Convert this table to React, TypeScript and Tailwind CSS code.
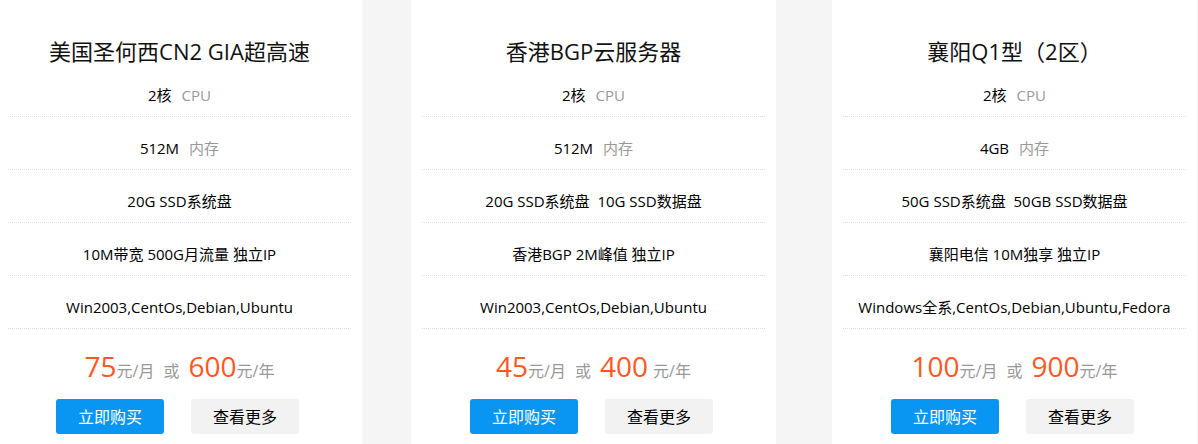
const PLANS = [
  {
    title: "美国圣何西CN2 GIA超高速",
    rows: [
      { main: "2核", sub: "CPU" },
      { main: "512M", sub: "内存" },
      { main: "20G SSD系统盘" },
      { main: "10M带宽 500G月流量 独立IP" },
      { main: "Win2003,CentOs,Debian,Ubuntu" },
    ],
    month: "75",
    year: "600",
    spaced: false,
  },
  {
    title: "香港BGP云服务器",
    rows: [
      { main: "2核", sub: "CPU" },
      { main: "512M", sub: "内存" },
      { main: "20G SSD系统盘  10G SSD数据盘" },
      { main: "香港BGP 2M峰值 独立IP" },
      { main: "Win2003,CentOs,Debian,Ubuntu" },
    ],
    month: "45",
    year: "400",
    spaced: true,
  },
  {
    title: "襄阳Q1型（2区）",
    rows: [
      { main: "2核", sub: "CPU" },
      { main: "4GB", sub: "内存" },
      { main: "50G SSD系统盘  50GB SSD数据盘" },
      { main: "襄阳电信 10M独享 独立IP" },
      { main: "Windows全系,CentOs,Debian,Ubuntu,Fedora" },
    ],
    month: "100",
    year: "900",
    spaced: false,
  },
];

type Plan = (typeof PLANS)[number];

function PlanCard({ plan, className }: { plan: Plan; className: string }) {
  return (
    <div className={`w-[365px] shrink-0 bg-white px-[11px] ${className}`}>
      <h3 className="pt-[39px] text-center text-[22px] leading-[25px] font-normal text-[#111]">
        {plan.title}
      </h3>
      {plan.rows.map((row, i) => (
        <div
          key={i}
          className="border-b border-dotted border-[#ddd] pt-[21px] pb-[11px] text-center text-[15px] leading-[20px] whitespace-pre text-black"
        >
          {row.main}
          {row.sub && <span className="ml-[10px] text-[#999]">{row.sub}</span>}
        </div>
      ))}
      <div className="mt-[23px] flex h-[32px] items-baseline justify-center leading-none text-[#999]">
        <span className="text-[28px] text-[#ff5722]">{plan.month}</span>
        <span className="text-[16px]">元/月</span>
        <span className="mx-[9px] text-[16px]">或</span>
        <span className="text-[28px] text-[#ff5722]">{plan.year}</span>
        <span className={`text-[16px] ${plan.spaced ? "ml-[5px]" : ""}`}>元/年</span>
      </div>
      <div className="mt-[15px] flex justify-center gap-[27px] pr-[4px]">
        <button className="h-[35px] w-[108px] rounded-[3px] bg-[#0996f2] text-[16px] text-white">
          立即购买
        </button>
        <button className="h-[35px] w-[108px] rounded-[3px] bg-[#f2f2f2] text-[16px] text-black">
          查看更多
        </button>
      </div>
    </div>
  );
}

export default function App() {
  return (
    <div
      className="h-[444px] w-[1198px] overflow-hidden bg-[#f5f5f5]"
      style={{ fontFamily: '"Open Sans", "Noto Sans CJK SC", sans-serif' }}
    >
      <div className="-ml-[3px] flex h-full">
        <PlanCard plan={PLANS[0]} className="" />
        <PlanCard plan={PLANS[1]} className="ml-[49px]" />
        <PlanCard plan={PLANS[2]} className="ml-[56px]" />
      </div>
    </div>
  );
}
